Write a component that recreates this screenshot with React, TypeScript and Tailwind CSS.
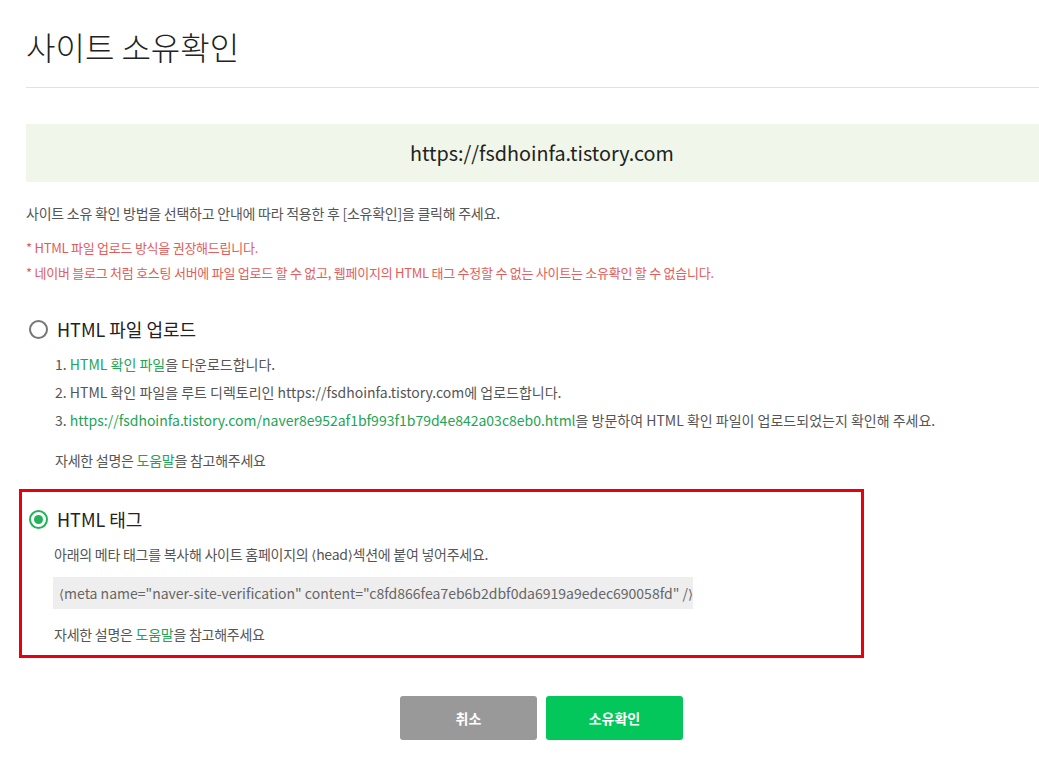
import React, { useState } from "react";

const font = { fontFamily: '"Noto Sans CJK KR", "Noto Sans", sans-serif' };

function Radio({ checked }: { checked: boolean }) {
  return (
    <span
      className={`flex h-[19px] w-[19px] items-center justify-center rounded-full border-2 ${
        checked ? "border-[#22b35c]" : "border-[#767676]"
      }`}
    >
      {checked && <span className="h-[9px] w-[9px] rounded-full bg-[#22b35c]" />}
    </span>
  );
}

function HelpLine() {
  return (
    <p className="text-[14px] leading-[18px] tracking-[-0.25px] text-[#555]">
      자세한 설명은 <span className="text-[#22a456]">도움말</span>을 참고해주세요
    </p>
  );
}

const L = () => <span className="font-['DejaVu_Sans'] text-[13px]">⟨</span>;
const R = () => <span className="font-['DejaVu_Sans'] text-[13px]">⟩</span>;

export default function App() {
  const [method, setMethod] = useState<"file" | "tag">("tag");

  return (
    <div className="min-h-[762px] w-[1039px] overflow-hidden bg-white pl-[26px]" style={font}>
      {/* Title */}
      <h1 className="pt-[25px] pb-[20px] text-[32px] font-light leading-[42px] text-[#222]">사이트 소유확인</h1>
      <div className="h-px bg-[#e2e2e2]" />

      {/* Site url */}
      <div className="mt-[36px] flex h-[58px] w-[1032px] items-center justify-center bg-[#f0f6e9] text-[19.8px] text-[#222]">
        https://fsdhoinfa.tistory.com
      </div>

      <p className="mt-[22px] text-[14px] leading-[18px] tracking-[-0.25px] text-[#555]">
        사이트 소유 확인 방법을 선택하고 안내에 따라 적용한 후 [소유확인]을 클릭해 주세요.
      </p>
      <p className="mt-[18px] text-[13px] leading-[16px] tracking-[-0.25px] text-[#e45b5b]">
        * HTML 파일 업로드 방식을 권장해드립니다.
      </p>
      <p className="mt-[9px] text-[13px] leading-[16px] tracking-[-0.25px] text-[#e45b5b]">
        * 네이버 블로그 처럼 호스팅 서버에 파일 업로드 할 수 없고, 웹페이지의 HTML 태그 수정할 수 없는 사이트는 소유확인 할 수 없습니다.
      </p>

      {/* Option 1 */}
      <div className="mt-[36px] pl-[3px]">
        <button className="flex items-center gap-[9px]" onClick={() => setMethod("file")}>
          <Radio checked={method === "file"} />
          <span className="text-[18px] leading-[24px] text-[#222]">HTML 파일 업로드</span>
        </button>
        <ol className="mt-[14px] flex flex-col gap-[10px] pl-[26px] text-[14px] leading-[18px] text-[#555]">
          <li>
            1. <span className="text-[#22a456]">HTML 확인 파일</span>을 다운로드합니다.
          </li>
          <li>2. HTML 확인 파일을 루트 디렉토리인 https://fsdhoinfa.tistory.com에 업로드합니다.</li>
          <li>
            3.{" "}
            <span className="text-[#22a456]">
              https://fsdhoinfa.tistory.com/naver8e952af1bf993f1b79d4e842a03c8eb0.html
            </span>
            을 방문하여 HTML 확인 파일이 업로드되었는지 확인해 주세요.
          </li>
        </ol>
        <div className="mt-[22px] pl-[26px]">
          <HelpLine />
        </div>
      </div>

      {/* Option 2 */}
      <div className="mt-[20px] ml-[-7px] w-[845px] border-[3px] border-[#e8000f] pt-[15px] pb-[12px] pl-[7px]">
        <button className="flex items-center gap-[9px]" onClick={() => setMethod("tag")}>
          <Radio checked={method === "tag"} />
          <span className="text-[18px] leading-[24px] text-[#222]">HTML 태그</span>
        </button>
        <div className="pl-[25px]">
          <p className="mt-[14px] text-[14px] leading-[18px] tracking-[-0.25px] text-[#555]">
            아래의 메타 태그를 복사해 사이트 홈페이지의 <L />head<R />섹션에 붙여 넣어주세요.
          </p>
          <div className="mt-[12px] ml-[-1px] h-[32px] w-[640px] whitespace-nowrap bg-[#eeeeee] pl-[6px] text-[14px] leading-[32px] text-[#666]">
            <L />meta name="naver-site-verification" content="c8fd866fea7eb6b2dbf0da6919a9edec690058fd" /<R />
          </div>
          <div className="mt-[16px]">
            <HelpLine />
          </div>
        </div>
      </div>

      {/* Buttons */}
      <div className="mt-[38px] flex justify-center gap-[9px] pl-[18px]">
        <button className="h-[44px] w-[137px] rounded-[3px] bg-[#999999] text-[14px] font-bold text-white">취소</button>
        <button className="h-[44px] w-[137px] rounded-[3px] bg-[#03c75a] text-[14px] font-bold text-white">소유확인</button>
      </div>
    </div>
  );
}
